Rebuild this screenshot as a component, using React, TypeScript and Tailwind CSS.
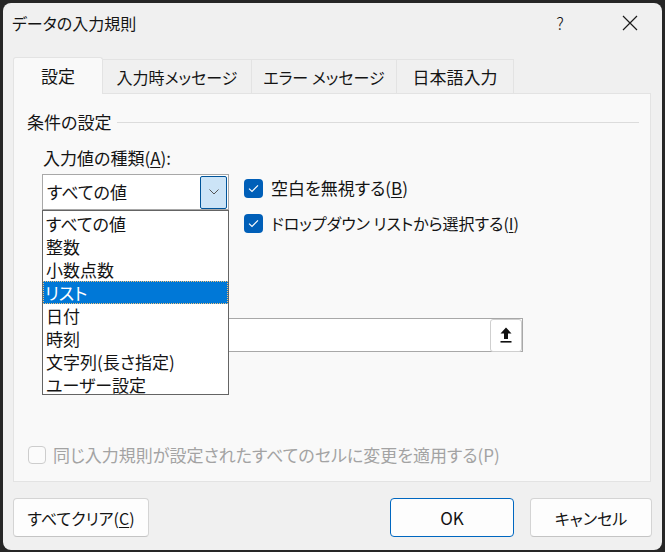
import React from 'react'

const items = ['すべての値', '整数', '小数点数', 'リスト', '日付', '時刻', '文字列(長さ指定)', 'ユーザー設定']

function Check() {
  return (
    <span className="w-[19px] h-[19px] rounded-[4px] bg-[#005fb8] flex items-center justify-center shrink-0">
      <svg width="11" height="9" viewBox="0 0 11 9" fill="none">
        <path d="M1 4.6 L4 7.4 L10 1.4" stroke="white" strokeWidth="1.1" />
      </svg>
    </span>
  )
}

export default function App() {
  return (
    <div className="w-[665px] h-[552px] bg-[#262626] pt-[3px] pl-[3px] pr-[3px] pb-[2px] [font-family:'Noto_Sans_CJK_JP',sans-serif] [font-feature-settings:'palt'] text-[16px] text-[#141414]">
      <div className="w-full h-full rounded-lg bg-[#f0f0f0] flex flex-col">
        {/* title bar */}
        <div className="h-[40px] flex items-center pl-[9px]">
          <span className="text-[16px]">データの入力規則</span>
          <span className="ml-auto mr-[58px] text-[17px] font-light">?</span>
          <svg width="16" height="16" viewBox="0 0 16 16" className="mr-[24px]">
            <path d="M1 1 L15 15 M15 1 L1 15" stroke="#1a1a1a" strokeWidth="1.2" />
          </svg>
        </div>

        <div className="mt-[14px] pl-[10px] pr-[11px]">
          {/* tabs */}
          <div className="flex items-end h-[36px]">
            <div className="relative z-10 -mb-px h-[37px] w-[90px] bg-[#f9f9f9] border border-b-0 border-[#e3e3e3] rounded-t-[3px] flex items-center justify-center text-[17px]">
              設定
            </div>
            <div className="h-[34px] w-[149px] border-t border-r border-[#e3e3e3] flex items-center justify-center">入力時メッセージ</div>
            <div className="h-[34px] w-[145px] border-t border-r border-[#e3e3e3] flex items-center justify-center">エラー メッセージ</div>
            <div className="h-[34px] w-[117px] border-t border-r border-[#e3e3e3] flex items-center justify-center text-[17px]">日本語入力</div>
          </div>

          {/* panel */}
          <div className="relative h-[389px] bg-[#f9f9f9] border border-[#e3e3e3] flex flex-col text-[17px]">
            <div className="mt-[16px] pl-[13px] pr-[11px] h-[24px] flex items-center gap-[6px]">
              <span>条件の設定</span>
              <div className="flex-1 h-px bg-[#dcdcdc]" />
            </div>

            <div className="mt-[12px] pl-[29px] h-[24px] flex items-center">
              入力値の種類(<span className="underline underline-offset-2">A</span>):
            </div>

            <div className="mt-[4px] pl-[28px] flex items-start">
              <div className="w-[187px] h-[36px] bg-white border border-[#a8a8a8] flex items-center pl-[4px] pr-[1px]">
                <span>すべての値</span>
                <div className="ml-auto w-[27px] h-[33px] bg-[#cce4f7] border border-[#005499] rounded-[2px] flex items-center justify-center">
                  <svg width="10" height="6" viewBox="0 0 10 6" fill="none">
                    <path d="M0.5 0.5 L5 5 L9.5 0.5" stroke="#555" strokeWidth="1" />
                  </svg>
                </div>
              </div>
              <div className="ml-[15px] mt-[2px] flex flex-col gap-[11px]">
                <div className="h-[24px] flex items-center gap-[8px]">
                  <Check />
                  <span>空白を無視する(<span className="underline underline-offset-2">B</span>)</span>
                </div>
                <div className="h-[24px] flex items-center gap-[8px] text-[16px]">
                  <Check />
                  <span>ドロップダウン リストから選択する(<span className="underline underline-offset-2">I</span>)</span>
                </div>
              </div>
            </div>

            {/* source field */}
            <div className="mt-[83px] ml-[30px] w-[479px] h-[34px] bg-white border border-[#a8a8a8] flex items-center justify-end">
              <div className="w-[32px] h-[33px] bg-white border border-[#cfcfcf] rounded-[3px] flex items-center justify-center">
                <svg width="12" height="16" viewBox="0 0 12 16">
                  <path d="M6 0.5 L11.5 6.5 L8 6.5 L8 12 L4 12 L4 6.5 L0.5 6.5 Z" fill="#111" />
                  <rect x="0.5" y="14" width="11" height="1.6" fill="#111" />
                </svg>
              </div>
            </div>

            {/* apply to all */}
            <div className="mt-[94px] pl-[14px] h-[18px] flex items-center gap-[7px] text-[#a3a3a3]">
              <span className="w-[18px] h-[18px] rounded-[4px] border border-[#cdcdcd] bg-[#fbfbfb] shrink-0" />
              <span>同じ入力規則が設定されたすべてのセルに変更を適用する(P)</span>
            </div>

            {/* open dropdown list */}
            <div className="absolute left-[28px] top-[116px] w-[187px] h-[185px] bg-white border border-[#646464] pt-px flex flex-col">
              {items.map((it, i) =>
                i === 3 ? (
                  <div
                    key={it}
                    className="h-[23px] shrink-0 bg-[#0078d7] text-white pl-[2px] flex items-center outline-1 outline-dotted outline-[#f3c27a] -outline-offset-1"
                  >
                    {it}
                  </div>
                ) : (
                  <div key={it} className="h-[23px] shrink-0 pl-[3px] flex items-center">
                    {it}
                  </div>
                )
              )}
            </div>
          </div>
        </div>

        {/* footer */}
        <div className="mt-[16px] pl-[10px] pr-[10px] flex items-center">
          <button className="w-[136px] h-[39px] bg-[#fdfdfd] border border-[#d4d4d4] border-b-[#c4c4c4] rounded-[4px]">
            すべてクリア(<span className="underline underline-offset-2">C</span>)
          </button>
          <button className="ml-auto w-[124px] h-[39px] bg-[#fdfdfd] border border-[#0067c0] rounded-[4px] text-[17px]">OK</button>
          <button className="ml-[16px] w-[122px] h-[39px] bg-[#fdfdfd] border border-[#d4d4d4] border-b-[#c4c4c4] rounded-[4px]">キャンセル</button>
        </div>
      </div>
    </div>
  )
}
